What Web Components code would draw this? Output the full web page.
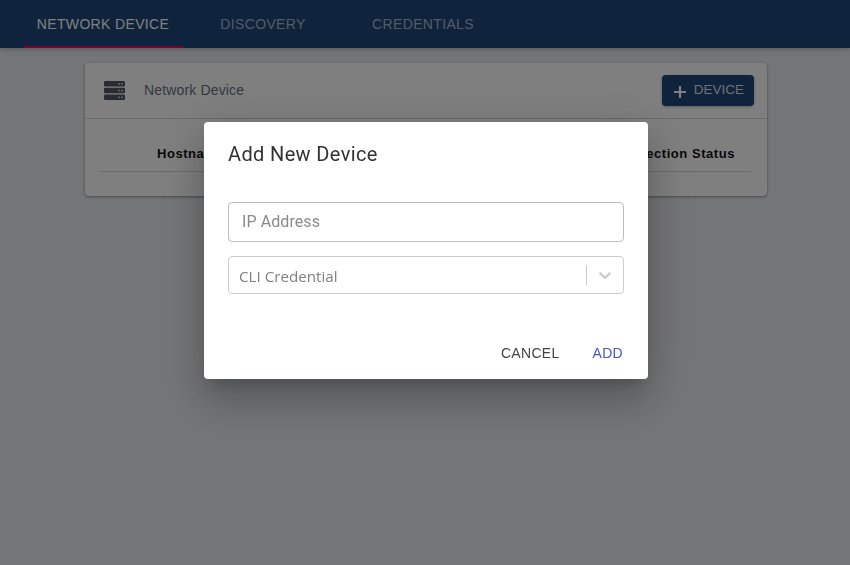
<!DOCTYPE html>
<html>
<head>
<meta charset="utf-8">
<style>
  html, body { margin: 0; height: 100%; }
  body { background: #e9ebee; font-family: "Liberation Sans", Arial, sans-serif; overflow: hidden; }
</style>
</head>
<body>
<app-tabs></app-tabs>
<device-card></device-card>
<modal-scrim>
  <add-device-dialog></add-device-dialog>
</modal-scrim>

<script>
class AppTabs extends HTMLElement {
    constructor() {
        super();
        this.attachShadow({ mode: "open" });
        this.shadowRoot.innerHTML = `
        <style>
            :host { display: flex; height: 48px; background: #20467a; padding-left: 23px; box-shadow: 0 2px 4px rgba(0,0,0,.2); }
            .tab {
                box-sizing: border-box; height: 48px; padding-top: 16px;
                font-size: 14px; line-height: 16px; letter-spacing: .35px; color: rgba(255,255,255,.62);
                text-align: center; position: relative;
            }
            .on { color: #fff; }
            .on::after { content: ""; position: absolute; left: 0; right: 0; bottom: 0; height: 2px; background: #f50057; }
        </style>
        <div class="tab on" style="width:160px">NETWORK DEVICE</div>
        <div class="tab" style="width:160px">DISCOVERY</div>
        <div class="tab" style="width:160px">CREDENTIALS</div>
        `;
    }
}

class DeviceCard extends HTMLElement {
    constructor() {
        super();
        this.attachShadow({ mode: "open" });
        this.shadowRoot.innerHTML = `
        <style>
            :host {
                display: block; box-sizing: border-box; width: 682px; height: 133px; margin: 15px 0 0 85px;
                background: #fff; border-radius: 4px; box-shadow: 0 1px 3px rgba(0,0,0,.4);
            }
            .head { display: flex; align-items: center; height: 55px; padding: 0 13px 0 19px; border-bottom: 1px solid #d6d6d6; }
            .head > svg { width: 21px; height: 19px; margin-right: 19px; }
            .title { flex: 1; font-size: 14px; letter-spacing: .15px; color: #667080; margin-bottom: 2px; }
            .btn {
                display: flex; align-items: center; height: 31px; padding: 0 10px 0 12px; border-radius: 4px;
                background: #20467a; color: rgba(255,255,255,.85); font-size: 13.5px; box-shadow: 0 1px 3px rgba(0,0,0,.3);
            }
            .btn svg { width: 12px; height: 12px; margin: 2px 8px 0 0; }
            .btn span { margin-bottom: 2px; }
            .row {
                display: flex; justify-content: space-between; margin: 0 16px 0 15px; padding: 27px 16px 0 57px; height: 25px;
                border-bottom: 1px solid #d6d6d6; font-size: 13px; font-weight: 700; color: #111; letter-spacing: .55px;
            }
        </style>
        <div class="head">
            <svg viewBox="0 0 21 19"><g fill="#50565f">
              <rect y="0" width="21" height="5.4" rx="1.2"/><rect y="6.8" width="21" height="5.4" rx="1.2"/><rect y="13.6" width="21" height="5.4" rx="1.2"/></g>
              <g fill="#c4c8ce"><rect x="14" y="2" width="2" height="1.5"/><rect x="17" y="2" width="2" height="1.5"/><rect x="14" y="8.8" width="2" height="1.5"/><rect x="17" y="8.8" width="2" height="1.5"/><rect x="14" y="15.6" width="2" height="1.5"/><rect x="17" y="15.6" width="2" height="1.5"/></g>
            </svg>
            <span class="title">Network Device</span>
            <div class="btn">
              <svg viewBox="0 0 12 12"><path d="M0 6h12M6 0v12" stroke="#fff" stroke-width="2.2"/></svg>
              <span>DEVICE</span>
            </div>
        </div>
        <div class="row"><span>Hostname</span><span>Connection Status</span></div>
        `;
    }
}

class ModalScrim extends HTMLElement {
    constructor() {
        super();
        this.attachShadow({ mode: "open" });
        this.shadowRoot.innerHTML = `
        <style>
            :host {
                position: fixed; inset: 0; background: rgba(0,0,0,.5);
                display: flex; justify-content: center; align-items: flex-start; padding: 122px 0 0 2px; box-sizing: border-box;
            }
        </style>
        <slot></slot>
        `;
    }
}

class AddDeviceDialog extends HTMLElement {
    constructor() {
        super();
        this.attachShadow({ mode: "open" });
        this.shadowRoot.innerHTML = `
        <style>
            :host {
                display: block; box-sizing: border-box; width: 444px; height: 257px; background: #fff; border-radius: 4px;
                padding: 20px 24px 0; color: #333; font-family: Roboto, sans-serif;
                box-shadow: 0 11px 15px -7px rgba(0,0,0,.2), 0 24px 38px 3px rgba(0,0,0,.14), 0 9px 46px 8px rgba(0,0,0,.12);
            }
            h2 { margin: 0; font-size: 20px; line-height: 24px; font-weight: 400; letter-spacing: .36px; }
            .ip {
                box-sizing: border-box; height: 40px; margin-top: 36px; padding: 0 13px; border: 1px solid #bdbdbd; border-radius: 4px;
                font-size: 16px; line-height: 37px; letter-spacing: .08px; color: #8a8a8a;
            }
            .sel {
                box-sizing: border-box; display: flex; align-items: center; height: 38px; margin-top: 14px; padding: 2px 0 0 10px;
                border: 1px solid #cccccc; border-radius: 4px; font-size: 15.2px; color: #808080; font-family: "Open Sans", sans-serif;
            }
            .sel span { flex: 1; }
            .sep { width: 1px; height: 20px; margin-top: -2px; background: #ccc; }
            .sel svg { width: 20px; height: 20px; margin: -2px 8px 0; }
            .acts {
                display: flex; justify-content: flex-end; gap: 33px; margin-top: 51px; padding-right: 1px; font-family: "Liberation Sans", Arial, sans-serif;
                font-size: 14px; line-height: 16px; letter-spacing: .3px; color: #444;
            }
            .add { color: #4458c8; }
        </style>
        <h2>Add New Device</h2>
        <div class="ip">IP Address</div>
        <div class="sel">
            <span>CLI Credential</span>
            <i class="sep"></i>
            <svg viewBox="0 0 20 20"><path fill="#ccc" d="M4.516 7.548c0.436-0.446 1.043-0.481 1.576 0l3.908 3.747 3.908-3.747c0.533-0.481 1.141-0.446 1.574 0 0.436 0.445 0.408 1.197 0 1.615-0.406 0.418-4.695 4.502-4.695 4.502-0.217 0.223-0.502 0.335-0.787 0.335s-0.57-0.112-0.789-0.335c0 0-4.287-4.084-4.695-4.502s-0.436-1.17 0-1.615z"/></svg>
        </div>
        <div class="acts"><span>CANCEL</span><span class="add">ADD</span></div>
        `;
    }
}

customElements.define("app-tabs", AppTabs);
customElements.define("device-card", DeviceCard);
customElements.define("modal-scrim", ModalScrim);
customElements.define("add-device-dialog", AddDeviceDialog);
</script>
</body>
</html>
